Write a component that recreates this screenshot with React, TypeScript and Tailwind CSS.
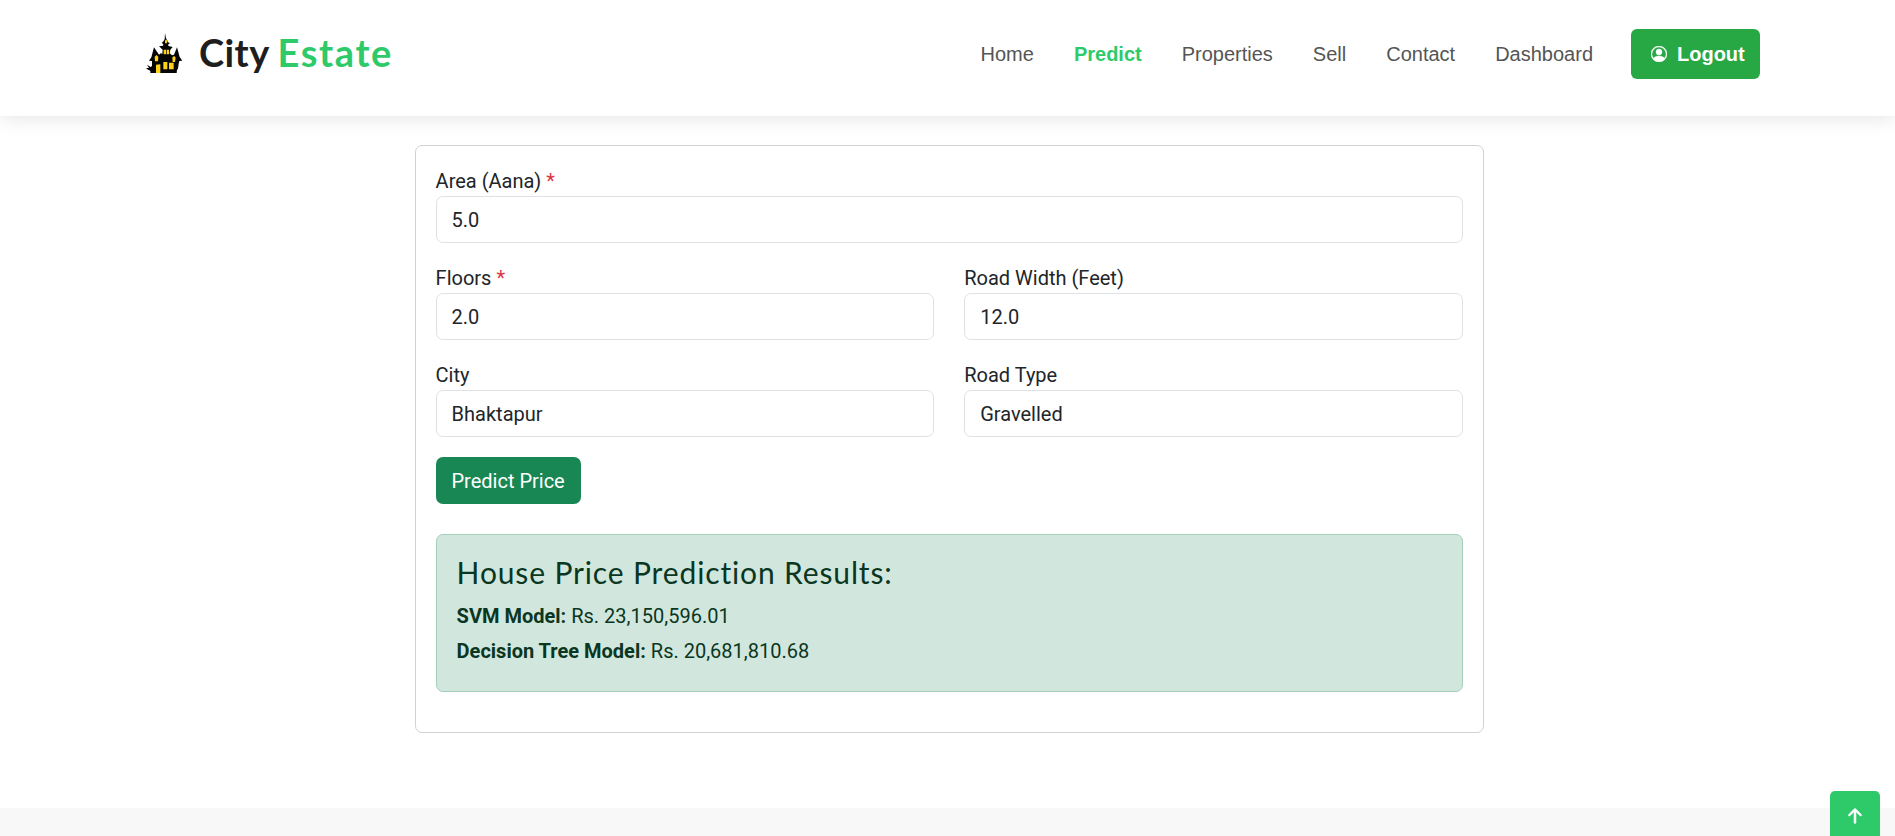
import type { ReactNode } from "react";
import { BsArrowUpShort, BsPersonCircle } from "react-icons/bs";

const links = ["Home", "Predict", "Properties", "Sell", "Contact", "Dashboard"];

function Castle() {
  return (
    <svg viewBox="0 0 108 120" className="-mt-px h-10 w-9 shrink-0" aria-hidden="true">
      <path
        fill="#050505"
        d="M57 0 60 16 63 20 66 28 72 31 67 34 67 39 80 42 73 50 71 61 78 67 84 65 93 43 101 72 109 83 100 84 98 92 96 107 93 110 92 120 13 120 13 113 6 110 0 105 9 105 3 95 14 102 18 99 18 84 9 83 16 73 24 43 39 65 44 61 49 62 50 50 39 40 51 38 52 33 47 30 53 24 56 18Z"
      />
      <path
        fill="#ffd21a"
        d="M57 24 60 19 64 24 63 31 57 31ZM53 50h7v14h-7ZM62 50h7v14h-7ZM26 71l6-5 5 6-1 13h-9ZM79 73l6-4 4 5-2 13h-7ZM52 87h12v22H52ZM69 89h14v20H69ZM30 95l13-1v26H30Z"
      />
    </svg>
  );
}

function Field({ label, value, required }: { label: string; value: string; required?: boolean }) {
  return (
    <label className="block min-w-0 flex-1">
      <span className="block h-[30px] leading-[30px]">
        {label}
        {required && <span className="text-[#dc3545]"> *</span>}
      </span>
      <input
        defaultValue={value}
        className="block h-[47px] w-full rounded-[7px] border border-[#dee2e6] bg-white px-[15px] outline-none"
      />
    </label>
  );
}

function Row({ children }: { children: ReactNode }) {
  return <div className="mb-5 flex gap-[30px]">{children}</div>;
}

export default function App() {
  return (
    <div className="flex h-[836px] flex-col overflow-hidden bg-white font-['Roboto',sans-serif] text-[20px] text-[#212529]">
      <header className="flex h-[116px] shrink-0 items-start justify-between pr-[135px] pl-[146px] shadow-[0_0_20px_rgba(0,0,0,0.13)]">
        <a className="flex h-[107px] items-center font-['Lato',sans-serif] text-[38px] font-bold text-[#1e1e1e]">
          <Castle />
          <span className="-mt-[2px] ml-[17px] tracking-[0.4px]">City</span>
          <span className="-mt-[2px] ml-[8px] tracking-[1.6px] text-[#2eca6a]">Estate</span>
        </a>
        <nav className="mt-[29px] flex h-[50px] items-center gap-10 font-['Liberation_Sans',sans-serif] text-[#555555]">
          {links.map((name) => (
            <a key={name} className={name === "Predict" ? "font-bold text-[#2eca6a]" : ""}>
              {name}
            </a>
          ))}
          <button className="-ml-[2px] flex h-[50px] w-[129px] items-center rounded-[6px] bg-[#28a745] pl-5 font-bold text-white">
            <BsPersonCircle className="mr-[10px] size-4 stroke-white stroke-[0.4]" />
            Logout
          </button>
        </nav>
      </header>

      <main className="mt-[29px] ml-[414.6px] h-[588px] w-[1069.2px] shrink-0 rounded-[7px] border border-[#d0d1d2] p-5">
        <Row>
          <Field label="Area (Aana)" value="5.0" required />
        </Row>
        <Row>
          <Field label="Floors" value="2.0" required />
          <Field label="Road Width (Feet)" value="12.0" />
        </Row>
        <Row>
          <Field label="City" value="Bhaktapur" />
          <Field label="Road Type" value="Gravelled" />
        </Row>
        <button className="block h-[47px] w-[145px] rounded-[7px] bg-[#198754] text-white">Predict Price</button>
        <section className="mt-[30px] h-[158px] rounded-[7px] border border-[#a3cfbb] bg-[#d1e7dd] px-5 pt-[19px] text-[#0a3622]">
          <h4 className="mb-[11px] h-9 font-['Lato',sans-serif] text-[30px] leading-9 tracking-[0.86px]">
            House Price Prediction Results:
          </h4>
          <p className="mb-[5px] leading-[30px]">
            <strong className="font-bold">SVM Model:</strong> Rs. 23,150,596.01
          </p>
          <p className="leading-[30px]">
            <strong className="font-bold">Decision Tree Model:</strong> Rs. 20,681,810.68
          </p>
        </section>
      </main>

      <footer className="mt-[75px] h-7 shrink-0 bg-[#f8f8f8]" />
      <button
        aria-label="Back to top"
        className="fixed top-[791px] right-[15px] flex size-[50px] items-center justify-center rounded-[5px] bg-[#2eca6a] text-white"
      >
        <BsArrowUpShort className="size-[30px] stroke-white stroke-[0.3]" />
      </button>
    </div>
  );
}
